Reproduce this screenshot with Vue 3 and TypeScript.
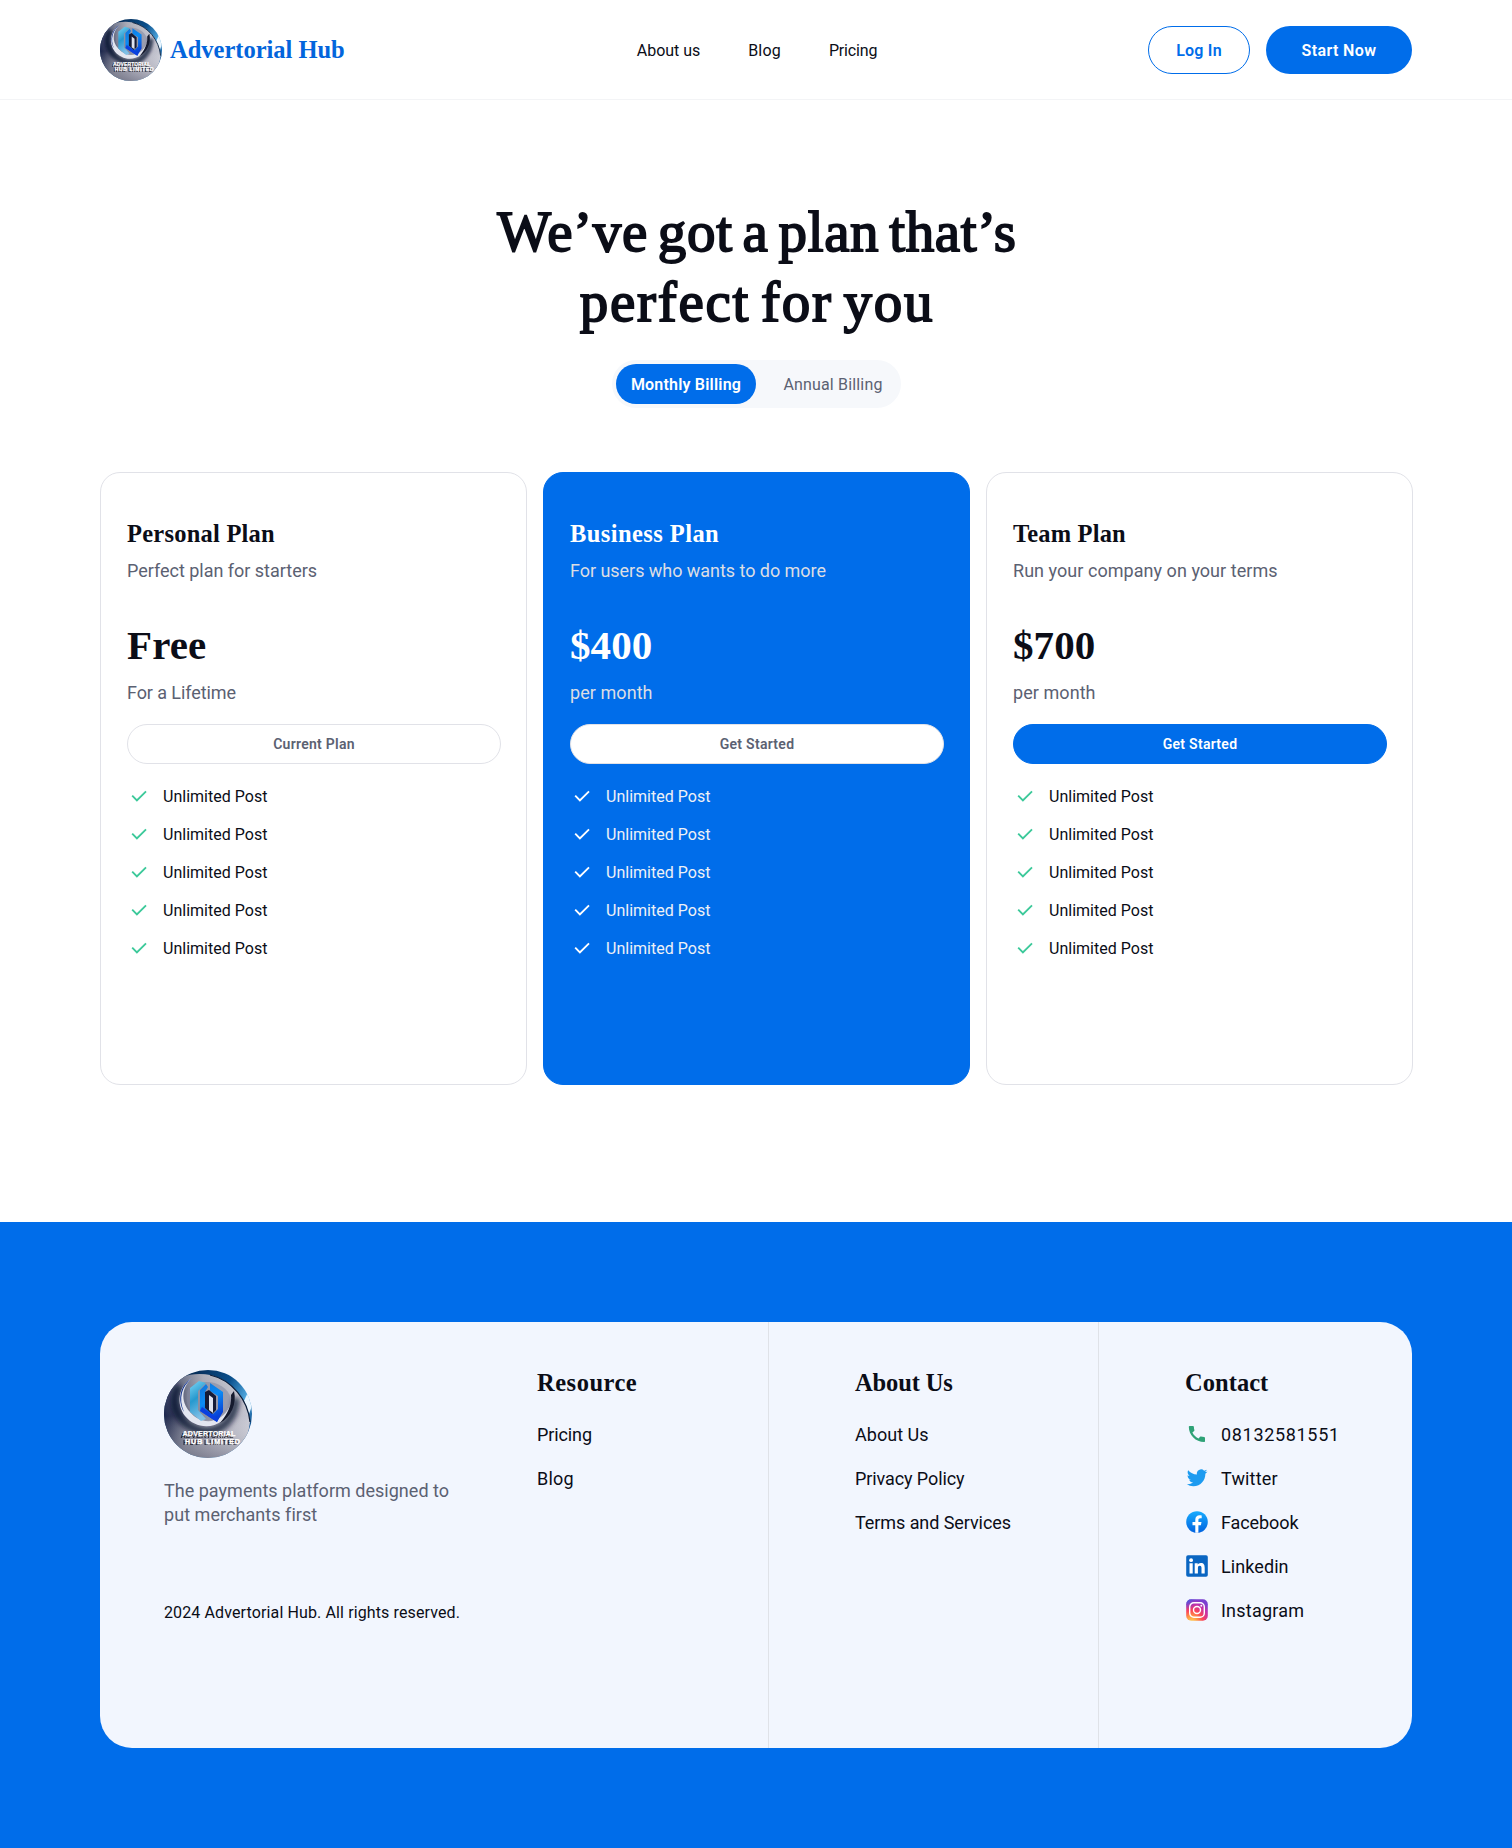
<script setup lang="ts">
import type { Directive } from 'vue'

interface Label {
  text: string
  width: number
}

interface Plan {
  variant: 'plain' | 'featured' | 'team'
  name: Label
  tagline: Label
  price: Label
  period: Label
  action: Label
}

interface ContactLink extends Label {
  icon: 'phone' | 'twitter' | 'facebook' | 'linkedin' | 'instagram'
}

// Tracks a label out (or in) so that its glyphs span the given width.
const vTrack: Directive<HTMLElement, number> = {
  mounted(el, { value }) {
    const size = parseFloat(getComputedStyle(el).fontSize)
    const count = (el.textContent ?? '').trim().length
    const natural = el.getBoundingClientRect().width
    const target = value + size * 0.03
    el.style.letterSpacing = `${((target - natural) / (count - 1)).toFixed(3)}px`
  },
}

const nav: Label[] = [
  { text: 'About us', width: 63 },
  { text: 'Blog', width: 32 },
  { text: 'Pricing', width: 48 },
]

const plans: Plan[] = [
  {
    variant: 'plain',
    name: { text: 'Personal Plan', width: 147 },
    tagline: { text: 'Perfect plan for starters', width: 189.5 },
    price: { text: 'Free', width: 78 },
    period: { text: 'For a Lifetime', width: 108.5 },
    action: { text: 'Current Plan', width: 81 },
  },
  {
    variant: 'featured',
    name: { text: 'Business Plan', width: 148 },
    tagline: { text: 'For users who wants to do more', width: 255.5 },
    price: { text: '$400', width: 81 },
    period: { text: 'per month', width: 82 },
    action: { text: 'Get Started', width: 74 },
  },
  {
    variant: 'team',
    name: { text: 'Team Plan', width: 112 },
    tagline: { text: 'Run your company on your terms', width: 264 },
    price: { text: '$700', width: 81 },
    period: { text: 'per month', width: 82 },
    action: { text: 'Get Started', width: 74 },
  },
]

const resources: Label[] = [
  { text: 'Pricing', width: 54.5 },
  { text: 'Blog', width: 36 },
]

const about: Label[] = [
  { text: 'About Us', width: 73 },
  { text: 'Privacy Policy', width: 109 },
  { text: 'Terms and Services', width: 155.5 },
]

const contacts: ContactLink[] = [
  { icon: 'phone', text: '08132581551', width: 117.5 },
  { icon: 'twitter', text: 'Twitter', width: 56 },
  { icon: 'facebook', text: 'Facebook', width: 77 },
  { icon: 'linkedin', text: 'Linkedin', width: 67 },
  { icon: 'instagram', text: 'Instagram', width: 82.5 },
]
</script>

<template>
  <div class="page">
    <svg class="defs" width="0" height="0" aria-hidden="true">
      <defs>
        <linearGradient id="disc" x1="0" y1="0.35" x2="1" y2="0.6">
          <stop offset="0" stop-color="#081440" />
          <stop offset="0.16" stop-color="#303858" />
          <stop offset="0.38" stop-color="#858797" />
          <stop offset="0.7" stop-color="#adadbb" />
          <stop offset="1" stop-color="#c9cad4" />
        </linearGradient>
        <linearGradient id="shade" x1="0" y1="0" x2="0" y2="1">
          <stop offset="0" stop-color="#fff" stop-opacity="0.35" />
          <stop offset="0.5" stop-color="#fff" stop-opacity="0" />
          <stop offset="1" stop-color="#4c4e63" stop-opacity="0.4" />
        </linearGradient>
        <linearGradient id="rim" x1="0" y1="0" x2="1" y2="0.6">
          <stop offset="0.2" stop-color="#06284f" />
          <stop offset="0.6" stop-color="#0a4f8c" />
          <stop offset="0.85" stop-color="#58b4ea" />
          <stop offset="1" stop-color="#0a4c8c" />
        </linearGradient>
        <linearGradient id="cyan" x1="0" y1="0" x2="0.3" y2="1">
          <stop offset="0" stop-color="#7cd6f5" />
          <stop offset="0.5" stop-color="#2699cf" />
          <stop offset="1" stop-color="#7fbfe6" />
        </linearGradient>
        <linearGradient id="blue" x1="0" y1="0" x2="0.4" y2="1">
          <stop offset="0" stop-color="#1273d8" />
          <stop offset="0.5" stop-color="#0b8cf5" />
          <stop offset="1" stop-color="#0741d6" />
        </linearGradient>
        <linearGradient id="fb" x1="0" y1="0" x2="0" y2="1">
          <stop offset="0" stop-color="#18acfe" />
          <stop offset="1" stop-color="#0163e0" />
        </linearGradient>
        <radialGradient id="ig" cx="0.25" cy="1.05" r="1.05">
          <stop offset="0" stop-color="#ffd45a" />
          <stop offset="0.25" stop-color="#ff9a45" />
          <stop offset="0.5" stop-color="#fb4458" />
          <stop offset="0.78" stop-color="#c62fa8" />
          <stop offset="1" stop-color="#7a3fd0" />
        </radialGradient>
        <radialGradient id="ig-corner" cx="0" cy="0" r="0.5">
          <stop offset="0" stop-color="#3c5fe0" />
          <stop offset="1" stop-color="#5a50d8" stop-opacity="0" />
        </radialGradient>
        <clipPath id="round"><circle cx="44" cy="44" r="44" /></clipPath>
        <filter id="soft" x="-30%" y="-30%" width="160%" height="160%"><feGaussianBlur stdDeviation="2.4" /></filter>
        <symbol id="emblem" viewBox="0 0 88 88">
          <g clip-path="url(#round)">
            <rect width="88" height="88" fill="url(#rim)" />
            <path d="M84 22l4 14-3 8-5-13z" fill="#e9f6ff" />
            <path d="M-4 20C10 6 30 2 46 5c22 5 38 25 40 47l-6 36H-4z" fill="url(#disc)" />
            <path d="M-4 20C10 6 30 2 46 5c22 5 38 25 40 47l-6 36H-4z" fill="url(#shade)" />
            <path d="M46 5c22 5 38 25 40 47" fill="none" stroke="#0a1c38" stroke-width="1.2" />
            <path d="M15 16C4 32 14 56 38 61c20 2 33-12 34-33" fill="none" stroke="#060c2c" stroke-width="8" opacity="0.7" filter="url(#soft)" />
            <path d="M28 8C14 16 12 34 21 46c9 11 25 14 37 5 9-7 13-18 11-29-1 12-5 20-12 25-10 7-23 5-31-5C16 31 18 17 28 8z" fill="#e3e6f0" />
            <path d="M25 17c-4 10-3 19 3 26 8 9 20 10 29 3 6-5 9-11 10-18C62 13 42 7 25 17z" fill="#8488a0" opacity="0.55" />
            <path d="M70 21c3 13-3 26-14 32 8-9 12-19 11-28z" fill="#151a2e" />
            <path d="M28 8C18 16 14 28 20 42c-7-12-4-27 8-34z" fill="#17368c" />
            <path d="M35 11l7 2-8 8v19l8 9-5 2-11-9V18z" fill="url(#cyan)" />
            <path d="M46 13l13 9v20l-6 10-17-11V20l6-6 2 3-3 5v16l8 6 5-5V26l-8-5z" fill="url(#blue)" />
            <path d="M41 22l4-2 7 6v14l-4 4-7-6z" fill="#151b36" />
            <path d="M45 25l4 3v15l-4-3z" fill="#dfe4f0" />
            <path d="M36 41l17 11 1-3-16-12z" fill="#0b3fe0" />
            <g font-family="Liberation Sans, Arial, sans-serif" font-size="7.2" font-weight="700">
              <g fill="#10131f" opacity="0.85">
                <text x="16.500" y="67.500" textLength="53">ADVERTORIAL</text>
                <text x="19" y="75" textLength="55">HUB LIMITED</text>
              </g>
              <g fill="#fff" stroke="#fff" stroke-width="0.25">
                <text x="18.500" y="66" textLength="53">ADVERTORIAL</text>
                <text x="21" y="73.500" textLength="55">HUB LIMITED</text>
              </g>
            </g>
          </g>
        </symbol>
      </defs>
    </svg>

    <header class="topbar">
      <a class="brand">
        <svg class="brand-mark"><use href="#emblem" /></svg>
        <span v-track="174" class="label serif brand-name">Advertorial Hub</span>
      </a>
      <nav class="nav">
        <a v-for="item in nav" :key="item.text" v-track="item.width" class="label">{{ item.text }}</a>
      </nav>
      <div class="actions">
        <button class="btn login"><span v-track="45" class="label">Log In</span></button>
        <button class="btn start"><span v-track="74" class="label">Start Now</span></button>
      </div>
    </header>

    <main class="main">
      <h1 class="headline serif">
        <span v-track="517" class="label">We’ve got a plan that’s</span><br />
        <span v-track="351" class="label">perfect for you</span>
      </h1>

      <div class="billing">
        <button class="billing-option active"><span v-track="109.5" class="label">Monthly Billing</span></button>
        <button class="billing-option"><span v-track="98.5" class="label">Annual Billing</span></button>
      </div>

      <section class="plans">
        <article v-for="plan in plans" :key="plan.name.text" class="plan" :class="plan.variant">
          <h2 class="plan-name serif"><span v-track="plan.name.width" class="label">{{ plan.name.text }}</span></h2>
          <p class="muted tagline"><span v-track="plan.tagline.width" class="label">{{ plan.tagline.text }}</span></p>
          <p class="price serif"><span v-track="plan.price.width" class="label">{{ plan.price.text }}</span></p>
          <p class="muted period"><span v-track="plan.period.width" class="label">{{ plan.period.text }}</span></p>
          <button class="plan-btn"><span v-track="plan.action.width" class="label">{{ plan.action.text }}</span></button>
          <ul class="features">
            <li v-for="n in 5" :key="n">
              <svg class="check" viewBox="0 0 24 24"><path d="M5.200 11.700l4.700 4.700L19 7.300" /></svg>
              <span v-track="104" class="label">Unlimited Post</span>
            </li>
          </ul>
        </article>
      </section>
    </main>

    <footer class="footer">
      <div class="footer-card">
        <div class="col intro">
          <svg class="footer-mark"><use href="#emblem" /></svg>
          <p class="muted">
            <span v-track="284.5" class="label">The payments platform designed to</span><br />
            <span v-track="152" class="label">put merchants first</span>
          </p>
          <small class="copyright"><span v-track="295.5" class="label">2024 Advertorial Hub. All rights reserved.</span></small>
        </div>
        <div class="col resource">
          <h3 class="serif"><span v-track="99" class="label">Resource</span></h3>
          <a v-for="item in resources" :key="item.text" class="link"><span v-track="item.width" class="label">{{ item.text }}</span></a>
        </div>
        <div class="col about">
          <h3 class="serif"><span v-track="97" class="label">About Us</span></h3>
          <a v-for="item in about" :key="item.text" class="link"><span v-track="item.width" class="label">{{ item.text }}</span></a>
        </div>
        <div class="col contact">
          <h3 class="serif"><span v-track="82.5" class="label">Contact</span></h3>
          <a v-for="item in contacts" :key="item.text" class="link">
            <svg class="icon" viewBox="0 0 24 24">
              <path
                v-if="item.icon === 'phone'"
                fill="#2fa277"
                d="M20.010 15.380c-1.230 0-2.420-.2-3.530-.56a.977.977 0 0 0-1.010.24l-1.570 1.970c-2.830-1.350-5.480-3.900-6.890-6.830l1.950-1.660c.27-.28.35-.67.24-1.020-.37-1.110-.56-2.300-.56-3.530 0-.54-.45-.99-.99-.99H4.190C3.650 3 3 3.240 3 3.990 3 13.280 10.730 21 20.010 21c.71 0 .99-.63.99-1.180v-3.450c0-.54-.45-.99-.99-.99z"
                transform="translate(1.100 1.200) scale(.9)"
              />
              <path
                v-else-if="item.icon === 'twitter'"
                fill="#1d9bf0"
                d="M23.950 4.570a10 10 0 0 1-2.820.77 4.960 4.960 0 0 0 2.160-2.720c-.95.55-2 .95-3.130 1.180a4.920 4.920 0 0 0-8.380 4.480C7.690 8.100 4.070 6.130 1.640 3.160a4.820 4.820 0 0 0-.67 2.480c0 1.710.87 3.210 2.190 4.100a4.900 4.900 0 0 1-2.230-.62v.06a4.920 4.920 0 0 0 3.950 4.830 5 5 0 0 1-2.210.08 4.940 4.940 0 0 0 4.600 3.420A9.870 9.870 0 0 1 0 19.540a13.990 13.990 0 0 0 7.560 2.210c9.050 0 14-7.500 14-13.980 0-.21 0-.42-.02-.63a9.940 9.940 0 0 0 2.460-2.550z"
                transform="translate(1.800 1.500) scale(.86)"
              />
              <template v-else-if="item.icon === 'facebook'">
                <circle cx="12" cy="12" r="10.800" fill="url(#fb)" />
                <path fill="#fff" d="M10.300 22.700v-7.400H7.500v-3.200h2.800V9.800c0-3 1.700-4.500 4.300-4.500.8 0 1.500.1 2.100.2v2.800h-1.400c-1.400 0-1.900.8-1.900 1.800v2h3.100l-.6 3.200h-2.500v7.400c-1 .2-2.100.2-3.100 0z" />
              </template>
              <template v-else-if="item.icon === 'linkedin'">
                <rect x="1.200" y="1.200" width="21.600" height="21.600" rx="1.800" fill="#0a66c2" />
                <circle cx="6.100" cy="6.200" r="1.900" fill="#fff" />
                <path fill="#fff" d="M4.500 9.300h3.200v10.300H4.500zM9.700 9.300h3v1.400c.5-.9 1.600-1.700 3.100-1.700 3.200 0 3.900 2.100 3.900 4.900v5.700h-3.200v-5c0-1.300 0-2.800-1.700-2.800s-1.900 1.300-1.900 2.700v5.100H9.700z" />
              </template>
              <template v-else>
                <rect x="1.200" y="1.200" width="21.600" height="21.600" rx="5" fill="url(#ig)" />
                <rect x="1.200" y="1.200" width="21.600" height="21.600" rx="5" fill="url(#ig-corner)" />
                <rect x="4.700" y="4.700" width="14.600" height="14.600" rx="4.200" fill="none" stroke="#fff" stroke-width="1.400" />
                <circle cx="12" cy="12" r="3.500" fill="none" stroke="#fff" stroke-width="1.400" />
                <circle cx="16.300" cy="7.700" r="0.950" fill="#fff" />
              </template>
            </svg>
            <span v-track="item.width" class="label">{{ item.text }}</span>
          </a>
        </div>
      </div>
    </footer>
  </div>
</template>

<style>
html,
body {
  margin: 0;
  background: #fff;
}
</style>

<style scoped>
.page {
  --blue: #006dea;
  --ink: #0b0d17;
  --muted: #5b6172;
  --line: #e1e2e8;
  display: flex;
  flex-direction: column;
  width: 1512px;
  height: 1848px;
  overflow: hidden;
  background: #fff;
  color: var(--ink);
  font-family: Roboto, 'Liberation Sans', sans-serif;
  font-size: 16px;
  line-height: 24px;
}
.page * {
  box-sizing: border-box;
}
.defs {
  position: absolute;
}
h1,
h2,
h3,
p,
ul {
  margin: 0;
  padding: 0;
  font-weight: 400;
}
button {
  padding: 0;
  border: 0;
  font: inherit;
  color: inherit;
  background: none;
}
.label {
  display: inline-block;
  white-space: nowrap;
}
.serif {
  font-family: 'Liberation Serif', 'Times New Roman', serif;
  font-weight: 700;
}

.topbar {
  display: grid;
  grid-template-columns: 1fr auto 1fr;
  align-items: center;
  flex: none;
  height: 100px;
  padding: 1px 100px 0;
  border-bottom: 1px solid #f3f4f6;
}
.brand {
  display: flex;
  align-items: center;
  gap: 8px;
}
.brand-mark {
  width: 62px;
  height: 62px;
}
.brand-name {
  padding-bottom: 1px;
  color: #0365dc;
  font-size: 24.5px;
  line-height: 32px;
}
.nav {
  display: flex;
  gap: 48px;
  padding: 2px 0 0 2px;
}
.actions {
  display: flex;
  justify-content: flex-end;
  gap: 16px;
}
.btn {
  height: 48px;
  padding-top: 2px;
  border-radius: 24px;
  font-weight: 600;
}
.login {
  width: 102px;
  border: 1px solid var(--blue);
  color: var(--blue);
}
.start {
  width: 146px;
  background: var(--blue);
  color: #fff;
}

.main {
  display: flex;
  flex-direction: column;
  align-items: center;
  flex: none;
  height: 1122px;
  padding-top: 97px;
}
.headline {
  padding-left: 2px;
  font-size: 57px;
  font-weight: 400;
  line-height: 70px;
  text-align: center;
  word-spacing: -5px;
  -webkit-text-stroke: 1.8px currentColor;
}
.billing {
  display: flex;
  align-items: center;
  width: 289px;
  height: 48px;
  margin-top: 23px;
  padding: 4px;
  border-radius: 24px;
  background: #f6f8fb;
}
.billing-option {
  flex: 1;
  height: 40px;
  padding: 2px 0 0 1px;
  border-radius: 20px;
  color: var(--muted);
}
.billing-option.active {
  flex: 0 0 140px;
  margin-right: 13px;
  background: var(--blue);
  color: #fff;
  font-weight: 600;
}

.plans {
  display: grid;
  grid-template-columns: repeat(3, 427px);
  gap: 16px;
  margin: 64px -1px 0 0;
}
.plan {
  height: 613px;
  padding: 45px 25px 0 26px;
  border: 1px solid var(--line);
  border-radius: 20px;
}
.plan-name {
  font-size: 24.5px;
  line-height: 32px;
}
.muted {
  color: var(--muted);
  font-size: 18px;
  line-height: 24px;
}
.tagline {
  margin-top: 9px;
}
.price {
  margin-top: 38px;
  font-size: 41px;
  line-height: 48px;
}
.period {
  margin-top: 12px;
}
.plan-btn {
  display: block;
  width: 374px;
  height: 40px;
  margin-top: 19px;
  border: 1px solid var(--line);
  border-radius: 20px;
  background: #fff;
  color: var(--muted);
  font-size: 14px;
  font-weight: 600;
}
.features {
  display: grid;
  gap: 14px;
  margin-top: 20px;
  list-style: none;
}
.features li {
  display: flex;
  align-items: center;
  gap: 12px;
}
.features .label,
.link .label {
  margin-bottom: -1px;
  padding-top: 1px;
}
.check {
  width: 24px;
  height: 24px;
  fill: none;
  stroke: #3cc99a;
  stroke-width: 1.9;
}
.featured {
  border-color: var(--blue);
  background: var(--blue);
  color: #fff;
}
.featured .muted {
  color: #dcdee4;
}
.featured .features {
  color: #eef1f6;
}
.featured .check {
  stroke: #fff;
}
.team .plan-btn {
  border-color: var(--blue);
  background: var(--blue);
  color: #fff;
}

.footer {
  flex: 1;
  padding: 100px;
  background: var(--blue);
}
.footer-card {
  display: grid;
  grid-template-columns: 437px 232px 330px 313px;
  height: 426px;
  border-radius: 32px;
  background: #f2f6fe;
}
.col {
  display: flex;
  flex-direction: column;
  padding-top: 45px;
}
.intro {
  padding: 48px 0 0 64px;
}
.footer-mark {
  width: 88px;
  height: 88px;
}
.intro .muted {
  margin-top: 21px;
}
.copyright {
  margin-top: 74px;
  font-size: 16px;
}
.resource,
.about {
  border-right: 1px solid #dfe2e8;
}
.about,
.contact {
  padding-left: 86px;
}
h3 {
  margin-bottom: 3px;
  font-size: 24.5px;
  line-height: 32px;
}
.link {
  display: flex;
  align-items: center;
  gap: 12px;
  height: 24px;
  margin-top: 20px;
  font-size: 18px;
}
.icon {
  width: 24px;
  height: 24px;
}
</style>
